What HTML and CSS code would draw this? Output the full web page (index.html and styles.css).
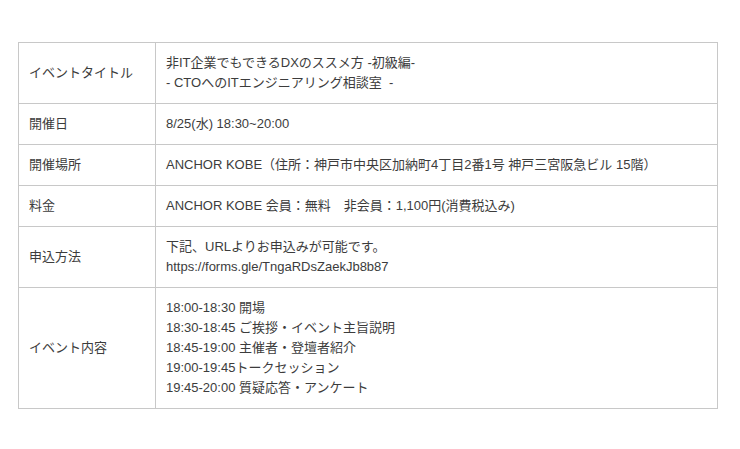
FILE: index.html
```html
<!DOCTYPE html>
<html lang="ja">

<head>
    <meta charset="UTF-8">
    <meta name="viewport" content="width=device-width, initial-scale=1.0">
    <title>イベント概要</title>
    <link rel="stylesheet" href="styles.css">
</head>

<body>
    <table class="event-table">
        <tr>
            <th>イベントタイトル</th>
            <td>非IT企業でもできるDXのススメ方 -初級編-<br>- CTOへのITエンジニアリング相談室&nbsp; -</td>
        </tr>
        <tr>
            <th>開催日</th>
            <td>8/25(水) 18:30~20:00</td>
        </tr>
        <tr>
            <th>開催場所</th>
            <td>ANCHOR KOBE（住所：神戸市中央区加納町4丁目2番1号 神戸三宮阪急ビル 15階）</td>
        </tr>
        <tr>
            <th>料金</th>
            <td>ANCHOR KOBE 会員：無料　非会員：1,100円(消費税込み)</td>
        </tr>
        <tr>
            <th>申込方法</th>
            <td>下記、URLよりお申込みが可能です。<br>https://forms.gle/TngaRDsZaekJb8b87</td>
        </tr>
        <tr>
            <th>イベント内容</th>
            <td>
                18:00-18:30 開場<br>
                18:30-18:45 ご挨拶・イベント主旨説明<br>
                18:45-19:00 主催者・登壇者紹介<br>
                19:00-19:45トークセッション<br>
                19:45-20:00 質疑応答・アンケート
            </td>
        </tr>
    </table>
</body>

</html>
```

FILE: styles.css
```css
body {
    margin: 0;
    padding: 42px 18px;
    background: #fff;
    font-family: "Liberation Sans", Arial, "Noto Sans CJK JP", sans-serif;
    font-size: 13px;
    line-height: 20px;
    color: #3c3c3c;
}

.event-table {
    width: 700px;
    border-collapse: collapse;
}

.event-table th,
.event-table td {
    border: 1px solid #c8c8c8;
    padding: 10px;
    text-align: left;
    font-weight: normal;
    vertical-align: middle;
}

.event-table th {
    width: 116px;
}
```
